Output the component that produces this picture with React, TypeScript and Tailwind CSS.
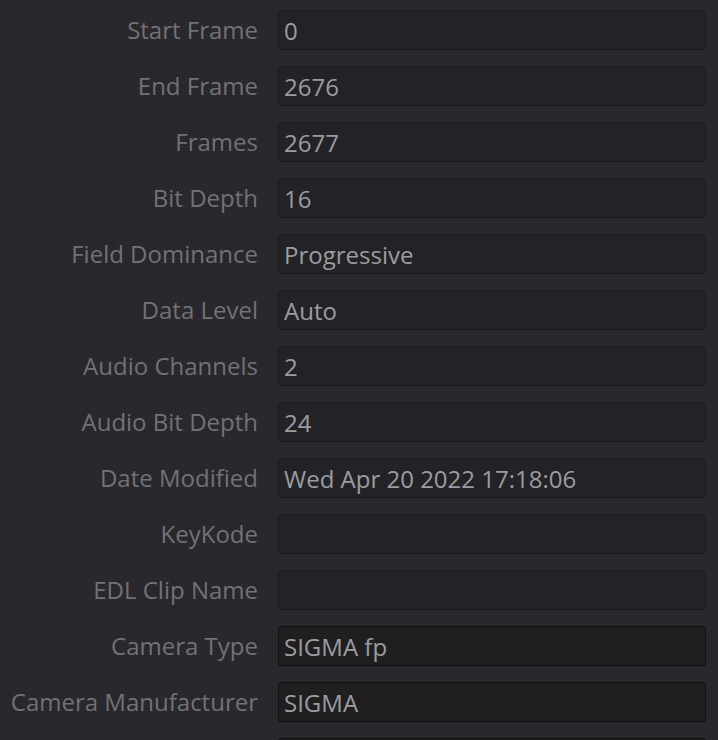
import React from "react";

const rows: { label: string; value: string; dark?: boolean }[] = [
  { label: "Start Frame", value: "0" },
  { label: "End Frame", value: "2676" },
  { label: "Frames", value: "2677" },
  { label: "Bit Depth", value: "16" },
  { label: "Field Dominance", value: "Progressive" },
  { label: "Data Level", value: "Auto" },
  { label: "Audio Channels", value: "2" },
  { label: "Audio Bit Depth", value: "24" },
  { label: "Date Modified", value: "Wed Apr 20 2022 17:18:06" },
  { label: "KeyKode", value: "" },
  { label: "EDL Clip Name", value: "" },
  { label: "Camera Type", value: "SIGMA fp", dark: true },
  { label: "Camera Manufacturer", value: "SIGMA", dark: true },
  { label: "", value: "", dark: true },
];

export default function App() {
  return (
    <div
      className="w-[718px] h-[740px] overflow-hidden bg-[#28282d] pt-[10px]"
      style={{ fontFamily: '"Open Sans", "Noto Sans", sans-serif' }}
    >
      <div className="flex flex-col gap-[16px]">
        {rows.map((r, i) => (
          <div key={i} className="flex items-center">
            <div className="w-[258px] shrink-0 text-right text-[24px] leading-[40px] text-[#727274] whitespace-nowrap">
              {r.label}
            </div>
            <div
              className={
                r.dark
                  ? "ml-[20px] w-[428px] h-[40px] rounded-[3px] border border-[#131315] bg-[#1f1f20] pl-[5px] pt-[1px] text-[24px] leading-[38px] text-[#9c9c9e] whitespace-nowrap"
                  : "ml-[20px] w-[428px] h-[40px] rounded-[3px] border border-[#1b1b1f] bg-[#232327] pl-[5px] pt-[1px] text-[24px] leading-[38px] text-[#9c9c9e] whitespace-nowrap"
              }
            >
              {r.value}
            </div>
          </div>
        ))}
      </div>
    </div>
  );
}
